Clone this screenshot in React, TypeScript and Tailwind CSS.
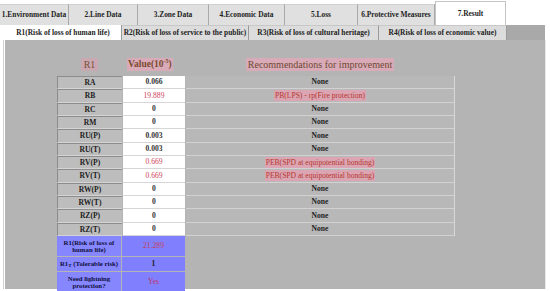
import React from "react";

const topTabs = [
  { t: "1.Environment Data", w: "w-[69px]" },
  { t: "2.Line Data", w: "w-[69px]" },
  { t: "3.Zone Data", w: "w-[71px]" },
  { t: "4.Economic Data", w: "w-[76px]" },
  { t: "5.Loss", w: "w-[73px]" },
  { t: "6.Protective Measures", w: "w-[77px]" },
];

const subTabs = [
  { t: "R1(Risk of loss of human life)", w: "w-[117px]", on: true },
  { t: "R2(Risk of loss of service to the public)", w: "w-[127px]", on: false },
  { t: "R3(Risk of loss of cultural heritage)", w: "w-[130px]", on: false },
  { t: "R4(Risk of loss of economic value)", w: "w-[128px]", on: false },
];

type Row = { k: string; v: string; r: string; hot?: boolean };

const rows: Row[] = [
  { k: "RA", v: "0.066", r: "None" },
  { k: "RB", v: "19.889", r: "PB(LPS) - rp(Fire protection)", hot: true },
  { k: "RC", v: "0", r: "None" },
  { k: "RM", v: "0", r: "None" },
  { k: "RU(P)", v: "0.003", r: "None" },
  { k: "RU(T)", v: "0.003", r: "None" },
  { k: "RV(P)", v: "0.669", r: "PEB(SPD at equipotential bonding)", hot: true },
  { k: "RV(T)", v: "0.669", r: "PEB(SPD at equipotential bonding)", hot: true },
  { k: "RW(P)", v: "0", r: "None" },
  { k: "RW(T)", v: "0", r: "None" },
  { k: "RZ(P)", v: "0", r: "None" },
  { k: "RZ(T)", v: "0", r: "None" },
];

export default function App() {
  return (
    <div className="w-[550px] h-[291px] bg-white overflow-hidden font-['Liberation_Serif',serif] text-[#1e1e1e]">
      {/* main tabs */}
      <div className="flex items-end h-[25px]">
        {topTabs.map((x) => (
          <div
            key={x.t}
            className={`${x.w} h-[21px] flex items-center justify-center bg-[#e0e0e0] border-t border-t-[#d0d0d0] border-r border-r-[#a9a9a9] text-[7.4px] font-bold leading-none whitespace-nowrap`}
          >
            {x.t}
          </div>
        ))}
        <div className="w-[71px] h-[24px] flex items-center justify-center bg-white border-t border-x border-[#c4c4c4] text-[7.4px] font-bold leading-none">
          7.Result
        </div>
      </div>

      {/* risk sub tabs */}
      <div className="flex h-[15px] ml-[5px] w-[540px] bg-[#a9a9a9]">
        {subTabs.map((x) => (
          <div
            key={x.t}
            className={`${x.w} h-full flex items-center justify-center border-r border-r-[#9a9a9a] text-[7.4px] font-bold leading-none whitespace-nowrap ${
              x.on ? "bg-white" : "bg-[#dcdcdc] border-t border-t-[#c8c8c8]"
            }`}
          >
            {x.t}
          </div>
        ))}
      </div>

      {/* content */}
      <div className="flex h-[249px]">
        <div className="w-[3px]" />
        <div className="w-px bg-[#d2d2d2]" />
        <div className="w-px" />
        <div className="w-[540px] bg-[#b4b4b4] pt-[18px] pl-[52px]">
          {/* header */}
          <div className="flex h-[18px] items-start">
            <div className="w-[65px] flex justify-center">
              <span className="bg-[#c9a8b2] px-[3px] text-[10px] leading-[13px] text-[#7a5038]">R1</span>
            </div>
            <div className="w-[63px] pl-[5px] flex">
              <span className="bg-[#d9aab8] px-[1px] text-[9.5px] font-bold leading-[13px] text-[#7a4c30] whitespace-nowrap">
                Value(10<span className="text-[6px] align-top leading-none">-5</span>)
              </span>
            </div>
            <div className="w-[270px] flex justify-center">
              <span className="bg-[#d9aab8] px-[2px] text-[10px] leading-[13px] text-[#6e4a32]">
                Recommendations for improvement
              </span>
            </div>
          </div>

          {/* rows */}
          <div className="flex flex-col">
            {rows.map((x) => (
              <div key={x.k} className="flex h-[13.35px]">
                <div className="w-[65px] flex items-center justify-center bg-[#bdbdbd] border-t border-l border-[#8c8c8c] border-b border-b-[#d4d4d4] text-[7.6px] font-bold leading-none">
                  {x.k}
                </div>
                <div className="w-px" />
                <div
                  className={`w-[62px] flex items-center justify-center bg-white border-b border-b-[#d6d6d6] text-[7.6px] leading-none ${
                    x.hot ? "text-[#d0405a]" : "font-semibold text-[#333]"
                  }`}
                >
                  {x.v}
                </div>
                <div className="w-px" />
                <div className="w-[269px] flex items-center justify-center bg-[#b8b8b8] border-b border-b-[#d2d2d2] border-r border-r-[#d8d8d8] text-[7.6px] leading-none">
                  {x.hot ? (
                    <span className="bg-[#dba5b3] px-[1px] text-[#b53a2e] leading-[11px] whitespace-nowrap">{x.r}</span>
                  ) : (
                    <span className="font-bold">{x.r}</span>
                  )}
                </div>
              </div>
            ))}

            {/* summary */}
            <div className="flex h-[20px]">
              <div className="w-[65px] flex items-center justify-center text-center bg-[#8686ff] border-r border-r-[#b4b4b4] text-[6.8px] font-bold leading-[7px] text-[#101040]">
                R1(Risk of loss of
                <br />
                human life)
              </div>
              <div className="w-[63px] flex items-center justify-center bg-[#8080ff] text-[7.6px] leading-none text-[#c0405a]">
                21.289
              </div>
            </div>
            <div className="flex h-[14px] mt-px">
              <div className="w-[65px] flex items-center justify-center bg-[#8686ff] border-r border-r-[#b4b4b4] text-[6.8px] font-bold leading-none text-[#101040] whitespace-nowrap">
                R1<span className="text-[5px] self-end mb-[3px]">T</span>&nbsp;(Tolerable risk)
              </div>
              <div className="w-[63px] flex items-center justify-center bg-[#8080ff] text-[7.6px] font-bold leading-none">
                1
              </div>
            </div>
            <div className="flex h-[19px] mt-px">
              <div className="w-[65px] flex items-center justify-center text-center bg-[#8686ff] border-r border-r-[#b4b4b4] text-[6.8px] font-bold leading-[7px] text-[#101040]">
                Need lightning
                <br />
                protection?
              </div>
              <div className="w-[63px] flex items-center justify-center bg-[#8080ff] text-[7.6px] leading-none text-[#c0306a]">
                Yes
              </div>
            </div>
          </div>
        </div>
        <div className="w-px bg-[#e8e8e8]" />
      </div>
    </div>
  );
}
